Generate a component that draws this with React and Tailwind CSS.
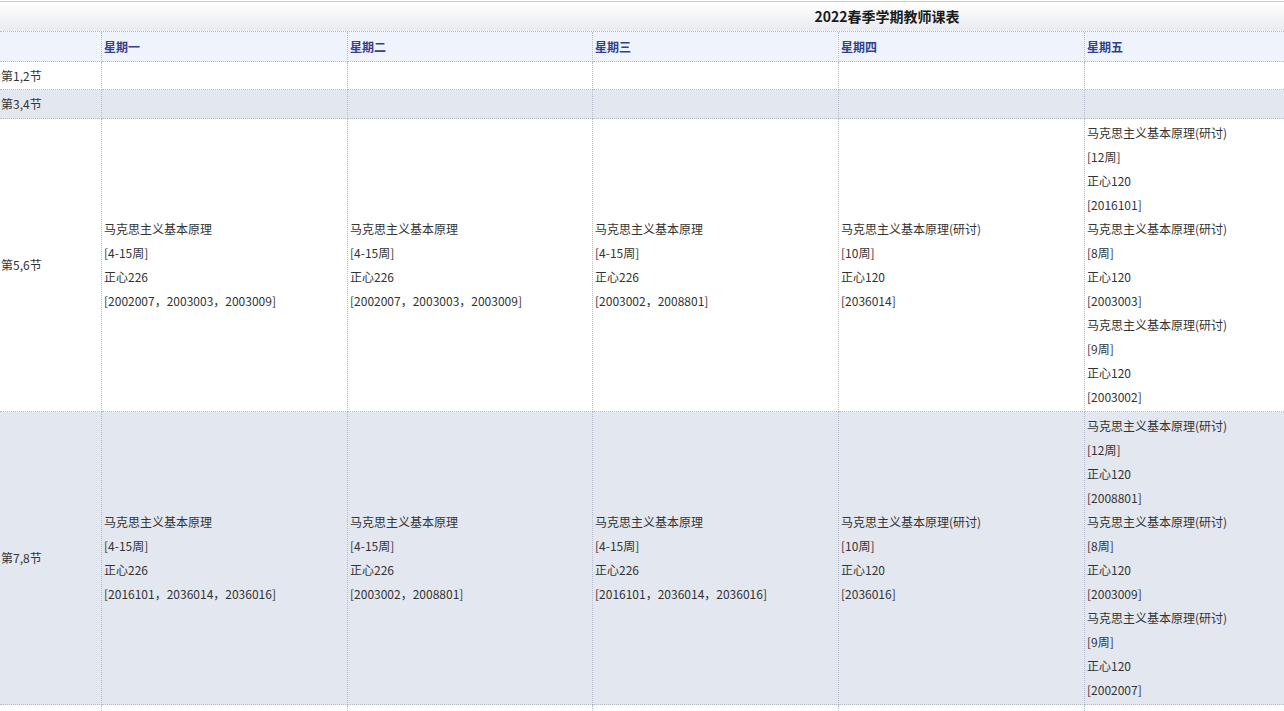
import React from "react";

const days = ["星期一", "星期二", "星期三", "星期四", "星期五"];

const row56 = [
  [["马克思主义基本原理", "[4-15周]", "正心226", "[2002007，2003003，2003009]"]],
  [["马克思主义基本原理", "[4-15周]", "正心226", "[2002007，2003003，2003009]"]],
  [["马克思主义基本原理", "[4-15周]", "正心226", "[2003002，2008801]"]],
  [["马克思主义基本原理(研讨)", "[10周]", "正心120", "[2036014]"]],
  [
    ["马克思主义基本原理(研讨)", "[12周]", "正心120", "[2016101]"],
    ["马克思主义基本原理(研讨)", "[8周]", "正心120", "[2003003]"],
    ["马克思主义基本原理(研讨)", "[9周]", "正心120", "[2003002]"],
  ],
];

const row78 = [
  [["马克思主义基本原理", "[4-15周]", "正心226", "[2016101，2036014，2036016]"]],
  [["马克思主义基本原理", "[4-15周]", "正心226", "[2003002，2008801]"]],
  [["马克思主义基本原理", "[4-15周]", "正心226", "[2016101，2036014，2036016]"]],
  [["马克思主义基本原理(研讨)", "[10周]", "正心120", "[2036016]"]],
  [
    ["马克思主义基本原理(研讨)", "[12周]", "正心120", "[2008801]"],
    ["马克思主义基本原理(研讨)", "[8周]", "正心120", "[2003009]"],
    ["马克思主义基本原理(研讨)", "[9周]", "正心120", "[2002007]"],
  ],
];

const cellBase =
  "border-r border-b border-dotted border-[#b4bccb] flex items-center pl-[2px]";

function Cell({ children, bg, h }) {
  return <div className={`${cellBase} ${bg} ${h}`}>{children}</div>;
}

function Courses({ items }) {
  return (
    <div className="py-[2px]">
      {items.flat().map((line, i) => (
        <div key={i} className="leading-[24px] h-[24px] whitespace-nowrap">
          {line}
        </div>
      ))}
    </div>
  );
}

export default function App() {
  return (
    <div
      className="w-full h-[711px] overflow-hidden bg-white text-[12px] text-[#333]"
      style={{ fontFamily: '"Noto Sans CJK SC", "Noto Sans", sans-serif' }}
    >
      <div className="w-[1774px] pt-px">
        <div className="h-[30px] border-t border-[#c3cfd8] bg-gradient-to-b from-white to-[#e7eaef] flex items-center justify-center">
          <span className="text-[14px] font-bold text-[#1a1a1a]">2022春季学期教师课表</span>
        </div>
        <div className="grid grid-cols-[102px_246px_245px_246px_246px_1fr] border-t border-dotted border-[#b4bccb]">
          {/* header */}
          <Cell bg="bg-[#eef3fc]" h="h-[30px]" />
          {days.map((d) => (
            <Cell key={d} bg="bg-[#eef3fc]" h="h-[30px]">
              <span className="font-bold text-[#353f8e]">{d}</span>
            </Cell>
          ))}

          {/* 1,2 */}
          <Cell bg="bg-white" h="h-[28px]">
            <span className="-ml-px">第1,2节</span>
          </Cell>
          {days.map((d) => (
            <Cell key={d} bg="bg-white" h="h-[28px]" />
          ))}

          {/* 3,4 */}
          <Cell bg="bg-[#e3e7ef]" h="h-[29px]">
            <span className="-ml-px">第3,4节</span>
          </Cell>
          {days.map((d) => (
            <Cell key={d} bg="bg-[#e3e7ef]" h="h-[29px]" />
          ))}

          {/* 5,6 */}
          <Cell bg="bg-white" h="h-auto">
            <span className="-ml-px">第5,6节</span>
          </Cell>
          {row56.map((items, i) => (
            <Cell key={i} bg="bg-white" h="h-auto">
              <Courses items={items} />
            </Cell>
          ))}

          {/* 7,8 */}
          <Cell bg="bg-[#e3e7ef]" h="h-auto">
            <span className="-ml-px">第7,8节</span>
          </Cell>
          {row78.map((items, i) => (
            <Cell key={i} bg="bg-[#e3e7ef]" h="h-auto">
              <Courses items={items} />
            </Cell>
          ))}

          {/* next row start */}
          <Cell bg="bg-white" h="h-[30px]" />
          {days.map((d) => (
            <Cell key={d} bg="bg-white" h="h-[30px]" />
          ))}
        </div>
      </div>
    </div>
  );
}
